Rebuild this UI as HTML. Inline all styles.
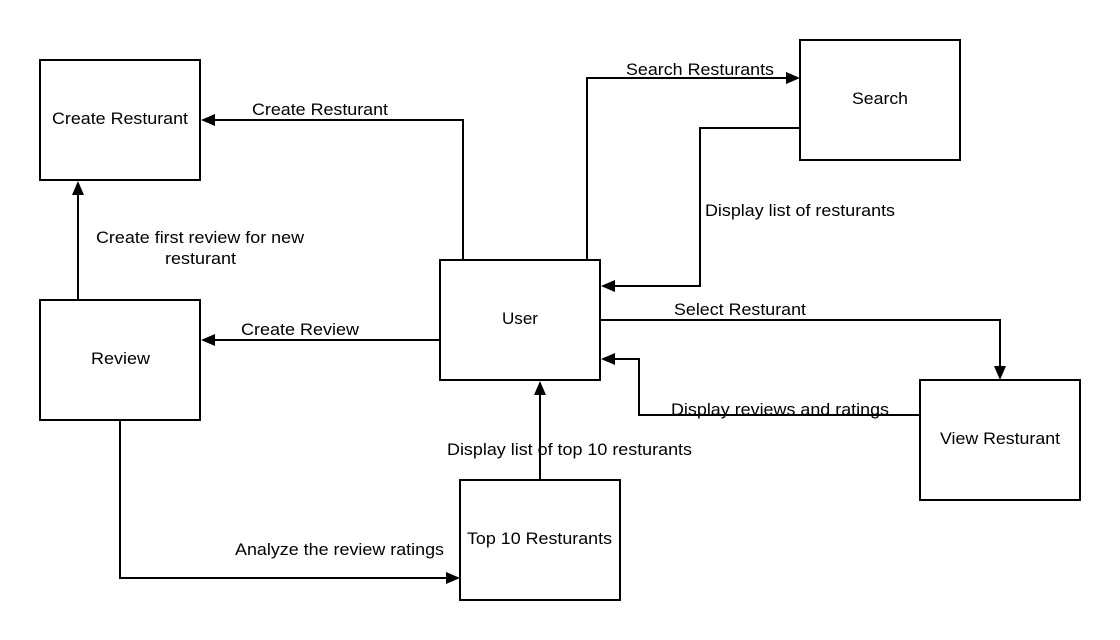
<!DOCTYPE html>
<html><head><style>
html,body{margin:0;padding:0;background:#fff;}
svg{display:block;}
text{font-family:"Liberation Sans",sans-serif;font-size:17px;fill:#000;}
</style></head><body>
<svg width="1120" height="640" viewBox="0 0 1120 640" xmlns="http://www.w3.org/2000/svg">
<g fill="none" stroke="#000" stroke-width="2">
<rect x="40" y="60" width="160" height="120"/>
<rect x="800" y="40" width="160" height="120"/>
<rect x="440" y="260" width="160" height="120"/>
<rect x="40" y="300" width="160" height="120"/>
<rect x="920" y="380" width="160" height="120"/>
<rect x="460" y="480" width="160" height="120"/>
<polyline points="463,260 463,120 214,120"/>
<polyline points="587,260 587,78 786,78"/>
<polyline points="800,128 700,128 700,286 614,286"/>
<polyline points="78,300 78,194"/>
<polyline points="440,340 214,340"/>
<polyline points="600,320 1000,320 1000,366"/>
<polyline points="920,415 639,415 639,359 614,359"/>
<polyline points="540,480 540,394"/>
<polyline points="120,420 120,578 446,578"/>
</g>
<g fill="#000">
<polygon points="201,120 215,114 215,126"/>
<polygon points="800,78 786,72 786,84"/>
<polygon points="601,286 615,280 615,292"/>
<polygon points="78,181 72,195 84,195"/>
<polygon points="201,340 215,334 215,346"/>
<polygon points="1000,380 994,366 1006,366"/>
<polygon points="601,359 615,353 615,365"/>
<polygon points="540,381 534,395 546,395"/>
<polygon points="460,578 446,572 446,584"/>
</g>
<g lengthAdjust="spacingAndGlyphs">
<text x="52" y="124" textLength="136" lengthAdjust="spacingAndGlyphs">Create Resturant</text>
<text x="852" y="104" textLength="56" lengthAdjust="spacingAndGlyphs">Search</text>
<text x="502" y="324" textLength="36" lengthAdjust="spacingAndGlyphs">User</text>
<text x="91" y="364" textLength="59" lengthAdjust="spacingAndGlyphs">Review</text>
<text x="940" y="444" textLength="120" lengthAdjust="spacingAndGlyphs">View Resturant</text>
<text x="467" y="544" textLength="145" lengthAdjust="spacingAndGlyphs">Top 10 Resturants</text>
<text x="96" y="243" textLength="208" lengthAdjust="spacingAndGlyphs">Create first review for new</text>
<text x="165" y="264" textLength="71" lengthAdjust="spacingAndGlyphs">resturant</text>
<text x="252" y="115" textLength="136" lengthAdjust="spacingAndGlyphs">Create Resturant</text>
<text x="626" y="75" textLength="148" lengthAdjust="spacingAndGlyphs">Search Resturants</text>
<text x="705" y="216" textLength="190" lengthAdjust="spacingAndGlyphs">Display list of resturants</text>
<text x="241" y="335" textLength="118" lengthAdjust="spacingAndGlyphs">Create Review</text>
<text x="674" y="315" textLength="132" lengthAdjust="spacingAndGlyphs">Select Resturant</text>
<text x="671" y="415" textLength="218" lengthAdjust="spacingAndGlyphs">Display reviews and ratings</text>
<text x="447" y="455" textLength="245" lengthAdjust="spacingAndGlyphs">Display list of top 10 resturants</text>
<text x="235" y="555" textLength="209" lengthAdjust="spacingAndGlyphs">Analyze the review ratings</text>
</g>
</svg>
</body></html>
